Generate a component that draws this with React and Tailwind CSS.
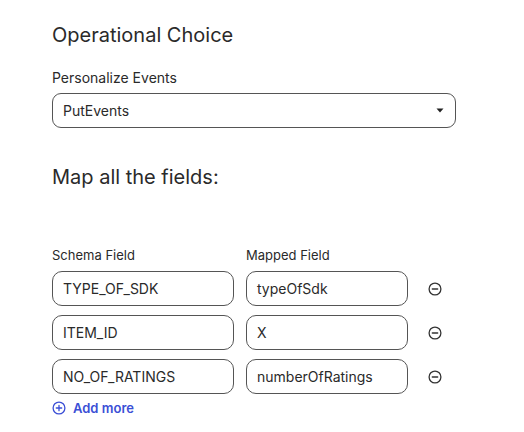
import React from "react";

const rows = [
  { schema: "TYPE_OF_SDK", mapped: "typeOfSdk" },
  { schema: "ITEM_ID", mapped: "X" },
  { schema: "NO_OF_RATINGS", mapped: "numberOfRatings" },
];

const MinusCircle = () => (
  <svg width="14" height="14" viewBox="0 0 14 14" fill="none" stroke="#333" strokeWidth="1.3">
    <circle cx="7" cy="7" r="5.9" />
    <path d="M4.3 7h5.4" strokeLinecap="round" />
  </svg>
);

const PlusCircle = () => (
  <svg width="14" height="14" viewBox="0 0 14 14" fill="none" stroke="#3b4fd6" strokeWidth="1.3">
    <circle cx="7" cy="7" r="5.9" />
    <path d="M4.3 7h5.4M7 4.3v5.4" strokeLinecap="round" />
  </svg>
);

export default function App() {
  return (
    <div
      className="min-h-screen bg-white pl-[52px] pt-[21px] text-[#2a2a2a]"
      style={{ fontFamily: "Inter, 'Noto Sans', sans-serif" }}
    >
      <h2 className="text-[20px] leading-[28px] font-normal">Operational Choice</h2>

      {/* Operation select */}
      <div className="mt-[19px] text-[14px] leading-[20px]">Personalize Events</div>
      <div className="mt-[5px] w-[404px] h-[35px] border border-[#555] rounded-[9px] flex items-center justify-between pl-[10px] pr-[10px]">
        <span className="text-[14px]">PutEvents</span>
        <svg width="8" height="5" viewBox="0 0 8 5" className="mr-[1px]">
          <path d="M0.5 0.5h7L4 4.5z" fill="#222" />
        </svg>
      </div>

      <h2 className="mt-[35px] text-[20px] leading-[28px] font-normal">Map all the fields:</h2>

      {/* Field mapping */}
      <div className="mt-[55px] flex gap-[13px] text-[13px] leading-[18px]">
        <div className="w-[181px]">Schema Field</div>
        <div className="w-[161px]">Mapped Field</div>
      </div>
      <div className="mt-[7px] flex flex-col gap-[9px]">
        {rows.map((r) => (
          <div key={r.schema} className="flex items-center">
            <div className="w-[182px] h-[35px] border border-[#555] rounded-[10px] flex items-center px-[10px] text-[14px]">
              {r.schema}
            </div>
            <div className="ml-[12px] w-[162px] h-[35px] border border-[#555] rounded-[10px] flex items-center px-[10px] text-[14px]">
              {r.mapped}
            </div>
            <div className="ml-[20px] flex items-center">
              <MinusCircle />
            </div>
          </div>
        ))}
      </div>
      <button className="mt-[5px] flex items-center gap-[7px] text-[13px] leading-[18px] font-semibold text-[#3b4fd6]">
        <PlusCircle />
        Add more
      </button>
    </div>
  );
}
